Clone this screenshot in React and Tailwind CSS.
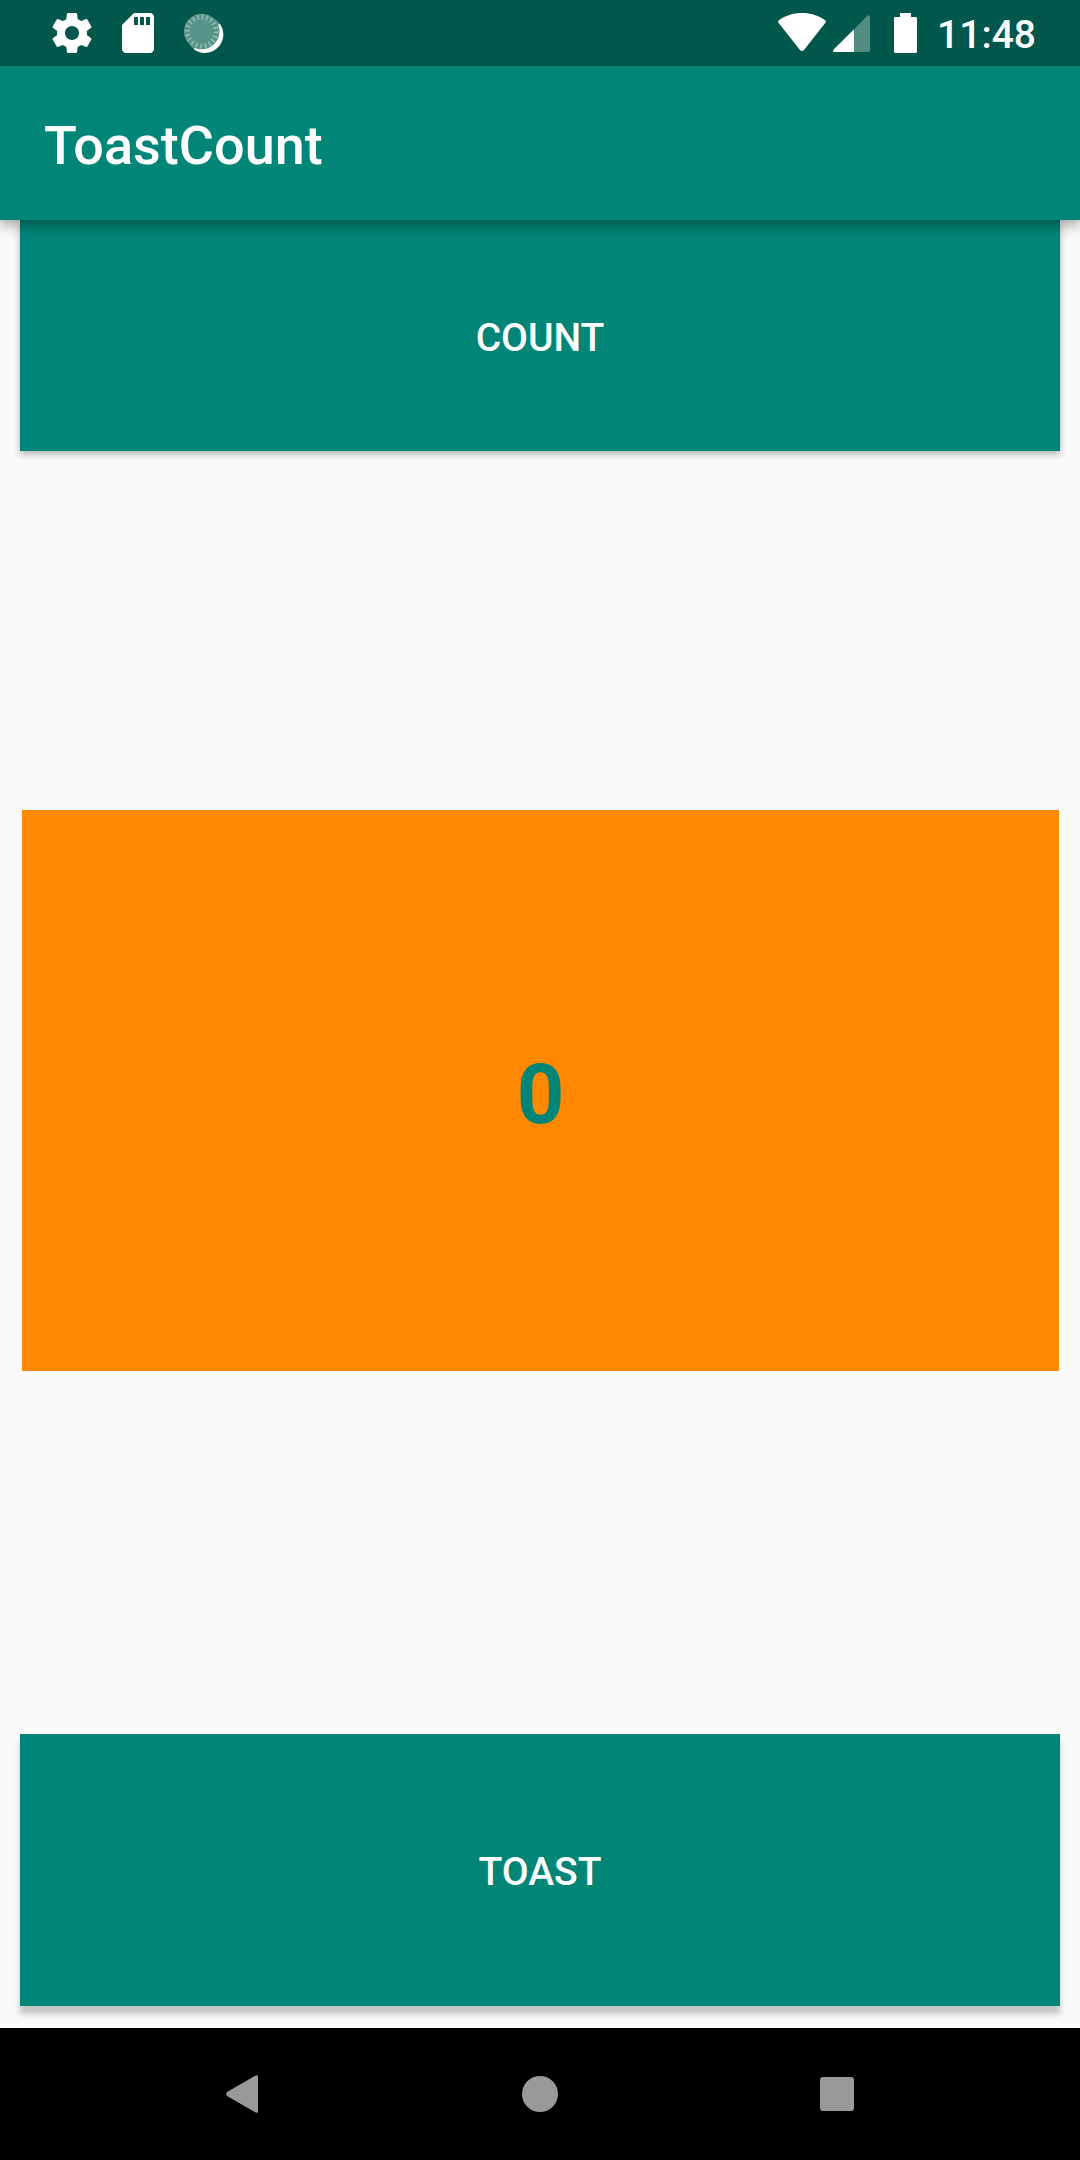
import { useState } from "react";

function SettingsIcon() {
  return (
    <svg className="size-12" viewBox="0 0 24 24" fill="white" aria-hidden="true">
      <path d="M19.43 12.98c.04-.32.07-.64.07-.98s-.03-.66-.07-.98l2.11-1.65c.19-.15.24-.42.12-.64l-2-3.46c-.12-.22-.39-.3-.61-.22l-2.49 1c-.52-.4-1.08-.73-1.69-.98l-.38-2.65C14.46 2.18 14.25 2 14 2h-4c-.25 0-.46.18-.49.42l-.38 2.65c-.61.25-1.17.59-1.69.98l-2.49-1c-.23-.09-.49 0-.61.22l-2 3.46c-.13.22-.07.49.12.64l2.11 1.65c-.04.32-.07.65-.07.98s.03.66.07.98l-2.11 1.65c-.19.15-.24.42-.12.64l2 3.46c.12.22.39.3.61.22l2.49-1c.52.4 1.08.73 1.69.98l.38 2.65c.03.24.24.42.49.42h4c.25 0 .46-.18.49-.42l.38-2.65c.61-.25 1.17-.59 1.69-.98l2.49 1c.23.09.49 0 .61-.22l2-3.46c.12-.22.07-.49-.12-.64l-2.11-1.65zM12 15.5c-1.93 0-3.5-1.57-3.5-3.5s1.57-3.5 3.5-3.5 3.5 1.57 3.5 3.5-1.57 3.5-3.5 3.5z" />
    </svg>
  );
}

function SdCardIcon() {
  return (
    <svg className="size-12" viewBox="0 0 24 24" fill="white" aria-hidden="true">
      <path d="M18 2h-8L4.02 8 4 20c0 1.1.9 2 2 2h12c1.1 0 2-.9 2-2V4c0-1.1-.9-2-2-2zm-6 6h-2V4h2v4zm3 0h-2V4h2v4zm3 0h-2V4h2v4z" />
    </svg>
  );
}

function SyncIcon() {
  return (
    <svg className="size-12" viewBox="0 0 48 48" aria-hidden="true">
      <circle cx="25" cy="25.500" r="18.500" fill="white" opacity="0.35" />
      <path d="M40 15a18.500 18.500 0 0 1-26 25.500L22 22.500z" fill="white" />
      <circle cx="21.700" cy="22.500" r="17.800" fill="#579386" />
      <circle
        cx="21.700"
        cy="22.500"
        r="14.500"
        fill="none"
        stroke="#94bbb3"
        strokeWidth="5"
        strokeDasharray="1.400 2.600"
        pathLength="80"
      />
    </svg>
  );
}

function WifiIcon() {
  return (
    <svg className="h-10 w-12" viewBox="0 0 48 40" fill="white" aria-hidden="true">
      <path d="M.6 7.6C7 2.5 15 0 24 0s17 2.5 23.4 7.600c.7.6.7 1.300.200 2L26 37c-1.200 1.400-2.800 1.400-4 0L.3 9.600c-.5-.7-.4-1.400.3-2z" />
    </svg>
  );
}

function SignalIcon() {
  return (
    <svg className="h-10 w-[37px]" viewBox="0 0 37 40" aria-hidden="true">
      <path d="M21 16.500 34 3c1.300-1.300 3-.6 3 1.200V37c0 1.200-.8 2-2 2H21z" fill="#528c81" />
      <path d="M21 16.300V39H1.500C0 39-.5 37.500.6 36.400z" fill="white" />
    </svg>
  );
}

function BatteryIcon() {
  return (
    <svg className="h-10 w-[23px]" viewBox="0 0 23 40" fill="white" aria-hidden="true">
      <path d="M6 0h11v4h4.500c.8 0 1.500.7 1.500 1.500v33c0 .8-.7 1.500-1.500 1.500h-20C.7 40 0 39.300 0 38.500v-33C0 4.700.7 4 1.500 4H6z" />
    </svg>
  );
}

function StatusBar() {
  return (
    <div className="z-20 flex h-[66px] shrink-0 items-center justify-between bg-[#00574b] pr-11 pl-12">
      <div className="flex items-center gap-[18px]">
        <SettingsIcon />
        <SdCardIcon />
        <SyncIcon />
      </div>
      <div className="flex items-center">
        <WifiIcon />
        <div className="ml-[7px] flex">
          <SignalIcon />
        </div>
        <div className="ml-6 flex">
          <BatteryIcon />
        </div>
        <time className="ml-5 pt-1 text-[39px] leading-[44px] font-medium">11:48</time>
      </div>
    </div>
  );
}

const navButton = "flex h-full w-24 items-center justify-center";

function NavigationBar() {
  return (
    <nav className="flex h-[132px] shrink-0 items-center justify-center gap-[201px] bg-black">
      <button type="button" aria-label="Back" className={navButton}>
        <svg className="h-10 w-9" viewBox="0 0 36 40" fill="#999">
          <path d="M30.600 1.600c1.200-.9 2.400-.3 2.400 1.200v34.400c0 1.500-1.200 2.100-2.400 1.200L2.400 22.200c-1.600-1.200-1.600-3.200 0-4.400z" />
        </svg>
      </button>
      <button type="button" aria-label="Home" className={navButton}>
        <span className="size-9 rounded-full bg-[#999]" />
      </button>
      <button type="button" aria-label="Recent apps" className={navButton}>
        <span className="size-[34px] rounded-[3px] bg-[#999]" />
      </button>
    </nav>
  );
}

export default function App() {
  const [count, setCount] = useState(0);
  const [toast, setToast] = useState(false);

  return (
    <div className="flex min-h-screen flex-col bg-[#fafafa] font-['Roboto',sans-serif] text-white">
      <StatusBar />
      <header className="z-10 flex h-[154px] shrink-0 items-center bg-[#008577] px-11 pt-1.5 shadow-[0_4px_14px_rgba(0,0,0,0.4)]">
        <h1 className="text-[54px] leading-[64px] font-medium">ToastCount</h1>
      </header>
      <main className="flex flex-1 flex-col justify-between px-5 pb-[22px]">
        <button
          type="button"
          onClick={() => setCount(count + 1)}
          className="h-[231px] bg-[#008577] pt-1.5 text-[39px] font-medium shadow-[0_3px_7px_rgba(0,0,0,0.3)]"
        >
          COUNT
        </button>
        <output className="mr-px mb-1 ml-0.5 flex h-[561px] items-center justify-center bg-[#ff8800] pt-2 text-[83px] leading-none font-bold text-[#008577]">
          {count}
        </output>
        <button
          type="button"
          onClick={() => setToast(!toast)}
          className="h-[272px] bg-[#008577] pt-1 text-[39px] font-medium shadow-[0_8px_6px_rgba(0,0,0,0.22)]"
        >
          TOAST
        </button>
      </main>
      <NavigationBar />
      {toast && (
        <div
          role="status"
          className="fixed bottom-80 left-1/2 -translate-x-1/2 rounded-full bg-neutral-700 px-12 py-6 text-[39px]"
        >
          Hello Toast!
        </div>
      )}
    </div>
  );
}
